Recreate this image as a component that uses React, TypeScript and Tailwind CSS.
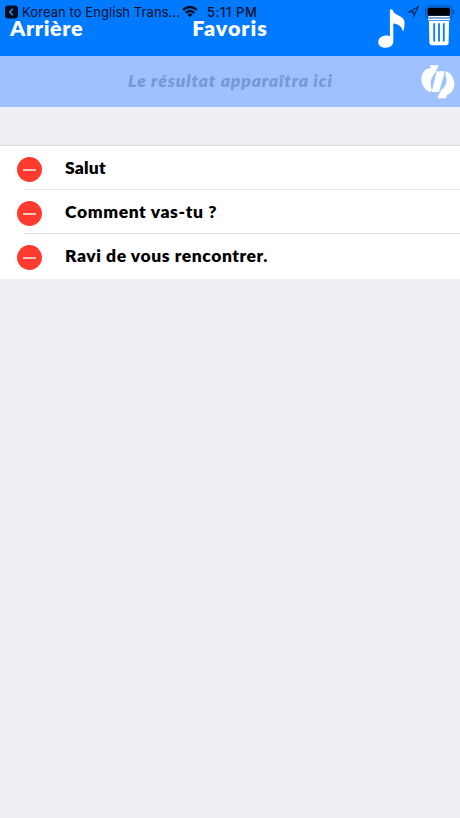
const favorites = [
  { text: 'Salut', tracking: 'tracking-[0.2px]' },
  { text: 'Comment vas-tu ?', tracking: 'tracking-[0.6px]' },
  { text: 'Ravi de vous rencontrer.', tracking: 'tracking-[0.55px]' },
]

function StatusBar() {
  return (
    <div className="absolute inset-x-0 top-0 h-6 text-[13px] leading-6 text-[#02102b] font-['Inter','Liberation_Sans',sans-serif]">
      <svg className="absolute inset-0" width="460" height="24" viewBox="0 0 460 24" fill="none">
        <rect x="5" y="5.5" width="13" height="13" rx="3" fill="#000d20" />
        <path d="M12.7 8.7 9.8 12l2.9 3.3" stroke="#2e9bf5" strokeWidth="1.4" />
        <g stroke="#001026" strokeWidth="2.2">
          <path d="M183 9.8q7-5.6 14 0" />
          <path d="M185.6 12.8q4.4-3.6 8.8 0" />
        </g>
        <path d="M187.4 14.4q2.6-2 5.2 0L190 17Z" fill="#001026" />
        <path d="m409.3 11.8 8.8-5-4.2 8.8-.7-3.8Z" stroke="#032a62" strokeWidth="1.3" />
        <rect x="425.5" y="6" width="26.5" height="12" rx="3" stroke="#07529f" />
        <rect x="427.5" y="7.8" width="22.5" height="8" rx="1.5" fill="#000" />
        <path d="M453.5 10.2q1.4 1.7 0 3.5" stroke="#063b7a" />
      </svg>
      <span className="absolute left-[22px] whitespace-nowrap tracking-[0.07px]">Korean to English Trans...</span>
      <span className="absolute left-[207px] whitespace-nowrap font-medium tracking-[0.55px]">5:11 PM</span>
    </div>
  )
}

function NoteIcon() {
  return (
    <svg width="28" height="40" viewBox="0 0 28 40" fill="#fff">
      <path d="M11.9 1.5Q11.9.3 13.3.3T15 1.8c.8 4.3 10.4 5 11.4 10.3.5 3.5-.2 7.2-1 9.9h-.7c-.8-4.5-4.2-6.7-9.4-7.4v18c0 3.8-3.5 6.2-7.4 6.2C3.6 38.8.2 36.6.2 33.2c0-4 3.8-6.6 8.3-6.6 1.3 0 2.4.2 3.4.6Z" />
    </svg>
  )
}

function TrashIcon() {
  return (
    <svg width="24" height="30" viewBox="0 0 24 30">
      <path d="M2 0h20q1 0 1 1.5v2.7H1V1.5Q1 0 2 0Z" fill="#fff" />
      <path d="M1.9 5h20.2l-.5 21.5q0 2.7-2.7 2.7H5.1q-2.7 0-2.7-2.7Z" fill="#fff" />
      <path d="M7.2 8v16.8M12 8v16.8M16.8 8v16.8" stroke="#1180f5" strokeWidth="1.9" strokeLinecap="round" />
    </svg>
  )
}

function SyncIcon() {
  return (
    <svg width="34" height="36" viewBox="0 0 34 36" fill="#fff">
      <path d="M8.5 1.2h9.3l-3.9 8.3C9.8 13.5 8.3 19.5 11 26l-2 2.3C2.5 25-.3 19 .5 13.4 1.2 8.6 4.2 5.3 7 4.5l3.2-.6Z" />
      <path d="M15.8 7.3h8.2L18 28h-7.4Z" />
      <path d="M25.8 7.5c5.9 3 8.4 9.4 7.4 15-.9 4.6-3.8 7.3-7.3 8.4L25 34.2h-8.8l4-8.3c5-3.4 6.9-9.6 3.8-16.2Z" />
    </svg>
  )
}

export default function App() {
  return (
    <div className="relative h-[818px] w-[460px] overflow-hidden bg-[#eeeef3] font-['Lato','Liberation_Sans',sans-serif]">
      <header className="relative grid h-14 grid-cols-[120px_220px_120px] bg-[#007aff] text-[21.5px] leading-[28px] font-extrabold text-white">
        <button className="mt-[14px] h-7 pl-[10px] text-left tracking-[0.65px] whitespace-nowrap">Arrière</button>
        <h1 className="mt-[14px] text-center tracking-[0.95px] whitespace-nowrap">Favoris</h1>
        <div className="flex items-start pt-[9px] pl-[38px]">
          <NoteIcon />
          <div className="mt-[7px] ml-[21px]">
            <TrashIcon />
          </div>
        </div>
      </header>
      <section className="flex h-[51px] items-center bg-[#9dc2ff]">
        <p className="flex-1 pb-0.5 pl-[40px] text-center text-[17.5px] leading-6 font-extrabold tracking-[0.85px] whitespace-nowrap text-[#7899d3] italic">
          Le résultat apparaîtra ici
        </p>
        <div className="mr-[5px]">
          <SyncIcon />
        </div>
      </section>
      <ul className="mt-[38px] border-t border-[#dddde1] bg-white">
        {favorites.map((item, i) => (
          <li key={item.text} className="relative flex h-[44.2px] items-center pl-[17px]">
            <span className="mt-[3px] flex size-[25px] items-center justify-center rounded-full bg-[#ff3b30]">
              <span className="h-[2px] w-[13px] bg-[#ffc4c0]" />
            </span>
            <span className={`ml-[23px] text-[17.5px] leading-6 font-extrabold whitespace-nowrap text-black ${item.tracking}`}>
              {item.text}
            </span>
            {i < favorites.length - 1 && <span className="absolute right-0 bottom-0 left-6 h-px bg-[#e3e3e6]" />}
          </li>
        ))}
      </ul>
      <StatusBar />
    </div>
  )
}
